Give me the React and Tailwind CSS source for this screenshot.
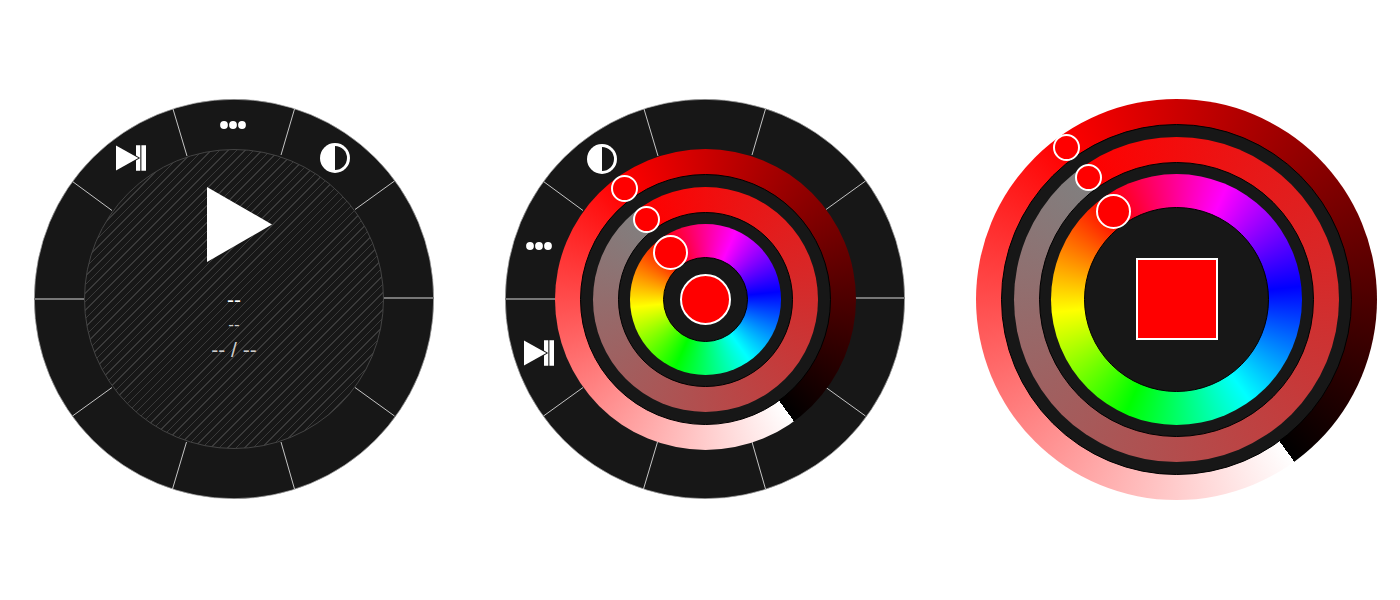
import React from "react";

function ContrastIcon() {
  return (
    <svg viewBox="0 0 30 30" className="block size-[30px]" aria-hidden="true">
      <circle cx="15" cy="15" r="15" fill="#fff" />
      <path d="M15 3a12 12 0 0 1 0 24z" fill="#171717" />
    </svg>
  );
}

function DotsIcon() {
  return (
    <svg viewBox="0 0 26 8" className="block h-2 w-[26px]" aria-hidden="true">
      <circle cx="4" cy="4" r="3.9" fill="#fff" />
      <circle cx="13" cy="4" r="3.9" fill="#fff" />
      <circle cx="22" cy="4" r="3.9" fill="#fff" />
    </svg>
  );
}

function StepIcon() {
  return (
    <svg viewBox="0 0 30 26" className="block h-[26px] w-[30px]" aria-hidden="true">
      <path d="M20 0.2h4.3v25.6H20zM25.4 0.2H30v25.6h-4.6z" fill="#fff" />
      <path d="M20 10.4L24.2 13 20 15.6z" fill="#171717" />
      <path d="M0 .4L22.4 13 0 25.6z" fill="#fff" />
    </svg>
  );
}

function PlayIcon() {
  return (
    <svg viewBox="0 0 76 76" className="block size-[76px]" aria-hidden="true">
      <path d="M11 0L76 37.5 11 75z" fill="#fff" />
    </svg>
  );
}

function SegmentDisc() {
  return (
    <svg viewBox="0 0 400 400" className="col-start-1 row-start-1 size-[400px]" aria-hidden="true">
      <circle cx="200" cy="200" r="199.7" fill="#171717" stroke="#aaa" strokeWidth="0.7" />
      <path
        d="M260.5 10L247 56M360.5 82L321 110.5M360.5 317L321 288.5M260.5 390L247 343M138.5 390L152.5 343M38.5 317L78 288.5M38.5 82.5L78 111.5M139 10L153 57"
        stroke="#c4c4c4"
        fill="none"
      />
      <path d="M0 200h50M350 199h50" stroke="#777" strokeWidth="2" />
    </svg>
  );
}

const disc = "col-start-1 row-start-1 rounded-full";
const hole = "col-start-1 row-start-1 rounded-full border border-black bg-[#171717]";
const lightness = "bg-[conic-gradient(from_144deg,#fff,#f00,#000)]";
const saturation = "bg-[conic-gradient(from_324deg,#f00,#808080)]";
const hue = "bg-[conic-gradient(from_324deg,#f00,#f0f,#00f,#0ff,#0f0,#ff0,#f00)]";

function Handle({ label, place }) {
  return (
    <input
      type="range"
      aria-label={label}
      className={`absolute m-0 appearance-none overflow-hidden rounded-full border-2 border-white bg-[#f00] [&::-webkit-slider-thumb]:appearance-none ${place}`}
    />
  );
}

function MediaDial() {
  return (
    <section aria-label="Media" className="relative grid shrink-0 place-items-center">
      <SegmentDisc />
      <div className="col-start-1 row-start-1 flex size-[300px] flex-col items-center rounded-full border border-[#444] bg-[#171717] bg-[repeating-linear-gradient(135deg,#171717_0px,#171717_5px,#3a3a3a_5px,#3a3a3a_6px)] pt-[37px] text-center">
        <button type="button" aria-label="Play"><PlayIcon /></button>
        <p className="mt-6 text-[21px] leading-[25px] text-white">--</p>
        <p className="text-[17px] leading-[25px] text-[#ccc]">--</p>
        <p className="text-[21px] leading-[25px] text-[#ccc]">-- / --</p>
      </div>
      <button type="button" aria-label="Play or pause" className="absolute top-[46px] left-[82px]"><StepIcon /></button>
      <button type="button" aria-label="More" className="absolute top-[22px] left-[186px]"><DotsIcon /></button>
      <button type="button" aria-label="Contrast" className="absolute top-[44px] left-[286px]"><ContrastIcon /></button>
    </section>
  );
}

function ColorMenuDial() {
  return (
    <section aria-label="Color menu" className="relative grid shrink-0 place-items-center">
      <SegmentDisc />
      <div className={`${disc} size-[301px] ${lightness}`} />
      <div className={`${hole} size-[251px]`} />
      <div className={`${disc} size-[225px] ${saturation}`} />
      <div className={`${hole} size-[175px]`} />
      <div className={`${disc} size-[151px] ${hue}`} />
      <div className={`${hole} size-[85px]`} />
      <button type="button" aria-label="Selected color" className={`${disc} size-[51px] border-2 border-white bg-[#f00]`} />
      <Handle label="Lightness" place="top-[76px] left-[106px] size-[27px]" />
      <Handle label="Saturation" place="top-[107px] left-[128px] size-[27px]" />
      <Handle label="Hue" place="top-[136px] left-[148px] size-[35px]" />
      <button type="button" aria-label="Contrast" className="absolute top-[45px] left-[82px]"><ContrastIcon /></button>
      <button type="button" aria-label="More" className="absolute top-[143px] left-[21px]"><DotsIcon /></button>
      <button type="button" aria-label="Play or pause" className="absolute top-[241px] left-[19px]"><StepIcon /></button>
    </section>
  );
}

function ColorDial() {
  return (
    <section aria-label="Color" className="relative grid shrink-0 place-items-center">
      <div className={`${disc} size-[401px] ${lightness}`} />
      <div className={`${hole} size-[351px]`} />
      <div className={`${disc} size-[325px] ${saturation}`} />
      <div className={`${hole} size-[275px]`} />
      <div className={`${disc} size-[251px] ${hue}`} />
      <div className={`${hole} size-[185px]`} />
      <button type="button" aria-label="Selected color" className="col-start-1 row-start-1 size-[82px] border-2 border-white bg-[#f00]" />
      <Handle label="Lightness" place="top-[35px] left-[77px] size-[27px]" />
      <Handle label="Saturation" place="top-[65px] left-[99px] size-[27px]" />
      <Handle label="Hue" place="top-[95px] left-[120px] size-[35px]" />
    </section>
  );
}

export default function App() {
  return (
    <main className="flex min-h-screen items-center justify-between bg-white pr-[23px] pb-[2px] pl-[34px] font-['Liberation_Sans',Arial,sans-serif]">
      <MediaDial />
      <ColorMenuDial />
      <ColorDial />
    </main>
  );
}
